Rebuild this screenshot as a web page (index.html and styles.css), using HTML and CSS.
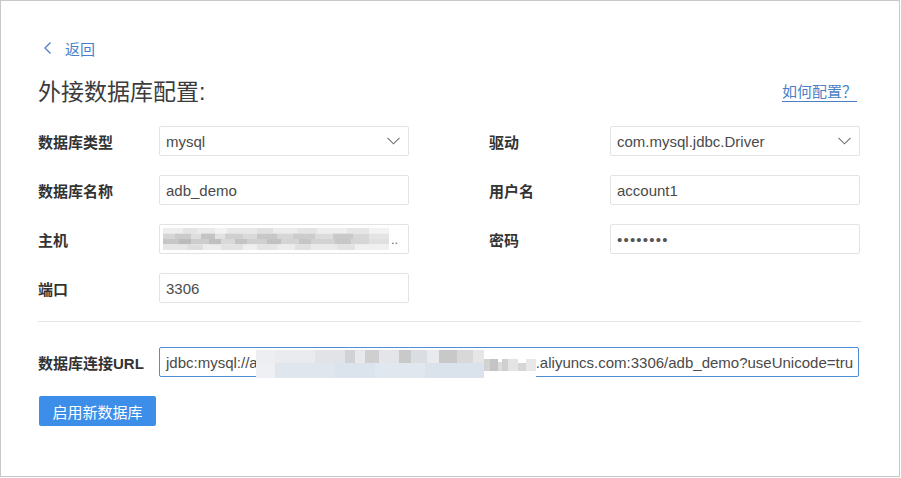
FILE: index.html
```html
<!DOCTYPE html>
<html lang="zh-CN">
<head>
<meta charset="utf-8">
<title>外接数据库配置</title>
<link rel="stylesheet" href="styles.css">
</head>
<body>
<div class="frame">
  <a class="back" href="#">
    <svg class="back-icon" width="9" height="14" viewBox="0 0 9 14"><path d="M7.5 1.5 L2 7 L7.5 12.5" fill="none" stroke="currentColor" stroke-width="1.3"/></svg>
    <span>返回</span>
  </a>
  <div class="title-row">
    <h1 class="title">外接数据库配置:</h1>
    <a class="help" href="#">如何配置？</a>
  </div>
  <div class="form-grid">
    <div class="field">
      <span class="label">数据库类型</span>
      <div class="control select"><span class="value">mysql</span><svg class="caret" width="13" height="8" viewBox="0 0 13 8"><path d="M0.5 0.8 L6.5 6.8 L12.5 0.8" fill="none" stroke="#707070" stroke-width="1.1"/></svg></div>
    </div>
    <div class="field">
      <span class="label">驱动</span>
      <div class="control select"><span class="value">com.mysql.jdbc.Driver</span><svg class="caret" width="13" height="8" viewBox="0 0 13 8"><path d="M0.5 0.8 L6.5 6.8 L12.5 0.8" fill="none" stroke="#707070" stroke-width="1.1"/></svg></div>
    </div>
    <div class="field">
      <span class="label">数据库名称</span>
      <div class="control"><span class="value">adb_demo</span></div>
    </div>
    <div class="field">
      <span class="label">用户名</span>
      <div class="control"><span class="value">account1</span></div>
    </div>
    <div class="field">
      <span class="label">主机</span>
      <div class="control host">
        <svg class="mosaic-host" width="226" height="22" viewBox="0 0 226 22">
          <g>
            <rect x="0" y="0" width="20" height="5.5" fill="#eeeeee"/><rect x="20" y="0" width="14" height="5.5" fill="#e4e4e4"/><rect x="34" y="0" width="18" height="5.5" fill="#eaeaea"/><rect x="52" y="0" width="12" height="5.5" fill="#f2f2f2"/><rect x="64" y="0" width="30" height="5.5" fill="#e8e8e8"/><rect x="94" y="0" width="16" height="5.5" fill="#e0e0e0"/><rect x="110" y="0" width="24" height="5.5" fill="#ececec"/><rect x="134" y="0" width="20" height="5.5" fill="#e4e4e4"/><rect x="154" y="0" width="30" height="5.5" fill="#eeeeee"/><rect x="184" y="0" width="22" height="5.5" fill="#e6e6e6"/><rect x="206" y="0" width="20" height="5.5" fill="#f2f2f2"/>
            <rect x="0" y="5.5" width="12" height="5.5" fill="#d5d5d5"/><rect x="12" y="5.5" width="16" height="5.5" fill="#cbcbcb"/><rect x="28" y="5.5" width="10" height="5.5" fill="#dedede"/><rect x="38" y="5.5" width="14" height="5.5" fill="#c4c4c4"/><rect x="52" y="5.5" width="10" height="5.5" fill="#e2e2e2"/><rect x="62" y="5.5" width="18" height="5.5" fill="#d0d0d0"/><rect x="80" y="5.5" width="14" height="5.5" fill="#dadada"/><rect x="94" y="5.5" width="20" height="5.5" fill="#c7c7c7"/><rect x="114" y="5.5" width="16" height="5.5" fill="#d6d6d6"/><rect x="130" y="5.5" width="22" height="5.5" fill="#cccccc"/><rect x="152" y="5.5" width="18" height="5.5" fill="#dcdcdc"/><rect x="170" y="5.5" width="20" height="5.5" fill="#c9c9c9"/><rect x="190" y="5.5" width="16" height="5.5" fill="#d7d7d7"/><rect x="206" y="5.5" width="20" height="5.5" fill="#e4e4e4"/>
            <rect x="0" y="11" width="16" height="5.5" fill="#c6c6c6"/><rect x="16" y="11" width="12" height="5.5" fill="#bbbbbb"/><rect x="28" y="11" width="18" height="5.5" fill="#cdcdcd"/><rect x="46" y="11" width="12" height="5.5" fill="#bfbfbf"/><rect x="58" y="11" width="14" height="5.5" fill="#d8d8d8"/><rect x="72" y="11" width="12" height="5.5" fill="#c3c3c3"/><rect x="84" y="11" width="20" height="5.5" fill="#d0d0d0"/><rect x="104" y="11" width="14" height="5.5" fill="#c1c1c1"/><rect x="118" y="11" width="18" height="5.5" fill="#d4d4d4"/><rect x="136" y="11" width="12" height="5.5" fill="#c5c5c5"/><rect x="148" y="11" width="24" height="5.5" fill="#d2d2d2"/><rect x="172" y="11" width="16" height="5.5" fill="#c7c7c7"/><rect x="188" y="11" width="18" height="5.5" fill="#d6d6d6"/><rect x="206" y="11" width="20" height="5.5" fill="#e0e0e0"/>
            <rect x="0" y="16.5" width="24" height="5.5" fill="#e6e6e6"/><rect x="24" y="16.5" width="16" height="5.5" fill="#dedede"/><rect x="40" y="16.5" width="18" height="5.5" fill="#ececec"/><rect x="58" y="16.5" width="22" height="5.5" fill="#e2e2e2"/><rect x="80" y="16.5" width="14" height="5.5" fill="#efefef"/><rect x="94" y="16.5" width="20" height="5.5" fill="#e4e4e4"/><rect x="114" y="16.5" width="18" height="5.5" fill="#ececec"/><rect x="132" y="16.5" width="16" height="5.5" fill="#e0e0e0"/><rect x="148" y="16.5" width="26" height="5.5" fill="#eaeaea"/><rect x="174" y="16.5" width="18" height="5.5" fill="#e2e2e2"/><rect x="192" y="16.5" width="34" height="5.5" fill="#f0f0f0"/>
          </g>
        </svg>
        <span class="dots">..</span>
      </div>
    </div>
    <div class="field">
      <span class="label">密码</span>
      <div class="control"><span class="value password">••••••••</span></div>
    </div>
    <div class="field">
      <span class="label">端口</span>
      <div class="control"><span class="value">3306</span></div>
    </div>
  </div>
  <hr class="divider">
  <div class="url-field">
    <span class="label">数据库连接URL</span>
    <div class="control url">
      <span class="value">jdbc:mysql://a</span><svg class="mosaic-url" width="280" height="28" viewBox="0 0 280 28">
        <rect x="0" y="0" width="280" height="28" fill="#f6f7f8"/>
        <rect x="0" y="0" width="19" height="13" fill="#eceef1"/><rect x="19" y="0" width="40" height="13" fill="#e9ebee"/><rect x="59" y="0" width="30" height="13" fill="#e1e3e7"/><rect x="89" y="0" width="10" height="13" fill="#d0d2d6"/><rect x="99" y="0" width="10" height="13" fill="#e6e8eb"/><rect x="109" y="0" width="14" height="13" fill="#cfcfcf"/><rect x="123" y="0" width="20" height="13" fill="#e3e5e8"/><rect x="143" y="0" width="12" height="13" fill="#c9c9c9"/><rect x="155" y="0" width="16" height="13" fill="#dadde1"/><rect x="171" y="0" width="12" height="13" fill="#e8eaed"/><rect x="183" y="0" width="18" height="13" fill="#c8c8c8"/><rect x="201" y="0" width="16" height="13" fill="#d8d8d8"/><rect x="217" y="0" width="11" height="13" fill="#e6e6e6"/><rect x="228" y="0" width="52" height="8" fill="#ffffff"/>
        <rect x="0" y="13" width="19" height="15" fill="#eef0f3"/><rect x="19" y="13" width="60" height="15" fill="#dfe6ee"/><rect x="79" y="13" width="40" height="15" fill="#dbe3ec"/><rect x="119" y="13" width="50" height="15" fill="#e1e7ef"/><rect x="169" y="13" width="59" height="15" fill="#dae2eb"/>
        <rect x="228" y="8" width="52" height="20" fill="#ffffff"/>
        <rect x="228" y="9" width="6" height="12" fill="#d2d2d2"/><rect x="234" y="9" width="8" height="12" fill="#c4c4c4"/><rect x="242" y="12" width="4" height="9" fill="#dcdcdc"/><rect x="246" y="9" width="6" height="12" fill="#cfcfcf"/><rect x="252" y="9" width="10" height="12" fill="#e4e4e4"/><rect x="262" y="13" width="8" height="8" fill="#d6d6d6"/><rect x="270" y="9" width="10" height="12" fill="#e8e8e8"/>
      </svg><span class="value">.aliyuncs.com:3306/adb_demo?useUnicode=tru</span>
    </div>
  </div>
  <button class="btn" type="button">启用新数据库</button>
</div>
</body>
</html>
```

FILE: styles.css
```css
* { box-sizing: border-box; }

html, body {
  margin: 0;
  padding: 0;
  background: #ffffff;
}

body {
  font-family: "Liberation Sans", "Noto Sans CJK SC", sans-serif;
  font-size: 15px;
  color: #333333;
}

.frame {
  width: 900px;
  height: 477px;
  border: 1px solid #c8c8c8;
  padding: 37px 37px 0 37px;
  display: flex;
  flex-direction: column;
  align-items: flex-start;
}

.back {
  display: flex;
  align-items: center;
  height: 20px;
  margin-left: 5px;
  color: #4a7fc6;
  text-decoration: none;
  font-size: 15px;
}

.back-icon {
  margin-right: 13px;
}

.title-row {
  margin-top: 18px;
  width: 100%;
  height: 32px;
  display: flex;
  align-items: center;
  justify-content: space-between;
}

.title {
  margin: 0;
  font-size: 23px;
  line-height: 32px;
  font-weight: normal;
  color: #3c3c3c;
}

.help {
  margin-right: 5px;
  font-size: 15px;
  line-height: 18px;
  color: #4a7fc6;
  text-decoration: none;
  border-bottom: 1px solid #4a7fc6;
}

.form-grid {
  margin-top: 18px;
  display: grid;
  grid-template-columns: 371px 371px;
  column-gap: 80px;
  row-gap: 19px;
}

.field,
.url-field {
  display: flex;
  align-items: center;
  height: 30px;
}

.label {
  width: 121px;
  flex: none;
  font-weight: bold;
  font-size: 15px;
  color: #333333;
}

.control {
  width: 250px;
  height: 30px;
  border: 1px solid #e3e3e3;
  border-radius: 2px;
  padding: 0 6px;
  display: flex;
  align-items: center;
  overflow: hidden;
  white-space: nowrap;
  color: #4a4a4a;
  font-size: 15px;
}

.select {
  justify-content: space-between;
  padding-right: 8px;
}

.caret {
  flex: none;
}

.password {
  letter-spacing: 1.2px;
  color: #555555;
}

.host {
  padding-left: 3px;
}

.mosaic-host {
  flex: none;
  display: block;
}

.dots {
  margin-left: 2px;
  color: #666666;
  font-size: 13px;
}

.divider {
  margin: 18px 0 0 0;
  width: 100%;
  height: 0;
  border: 0;
  border-top: 1px solid #e6e6e6;
}

.url-field {
  margin-top: 25px;
}

.url {
  width: 700px;
  border-color: #4c8fd6;
  overflow: visible;
  clip-path: inset(0 0 -4px 0);
}

.url .value {
  flex: none;
}

.mosaic-url {
  flex: none;
  display: block;
  margin-left: -2px;
  margin-top: 3px;
}

.btn {
  margin-top: 19px;
  margin-left: 1px;
  width: 117px;
  height: 30px;
  border: 0;
  border-radius: 2px;
  background: #3d8ee9;
  color: #ffffff;
  font-family: "Liberation Sans", "Noto Sans CJK SC", sans-serif;
  font-size: 15px;
  padding: 0;
}
```
